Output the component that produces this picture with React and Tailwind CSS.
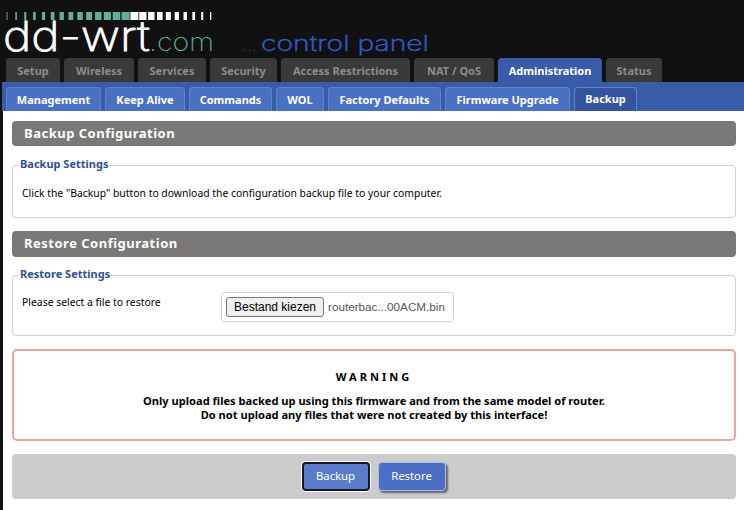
const mainTabs = [
  { label: 'Setup', w: 'w-[54px]' },
  { label: 'Wireless', w: 'w-[70px]' },
  { label: 'Services', w: 'w-[68px]' },
  { label: 'Security', w: 'w-[67px]' },
  { label: 'Access Restrictions', w: 'w-[129px]' },
  { label: 'NAT / QoS', w: 'w-[80px]' },
  { label: 'Administration', w: 'w-[104px]', active: true },
  { label: 'Status', w: 'w-[56px]' },
];

const subTabs = [
  { label: 'Management', w: 'w-[95px]' },
  { label: 'Keep Alive', w: 'w-[80px]' },
  { label: 'Commands', w: 'w-[83px]' },
  { label: 'WOL', w: 'w-[48px]' },
  { label: 'Factory Defaults', w: 'w-[113px]' },
  { label: 'Firmware Upgrade', w: 'w-[125px]' },
  { label: 'Backup', w: 'w-[63px]', active: true },
];

const bars = Array.from({ length: 24 }, (_, i) => {
  const green = i < 14;
  const width = green ? 1 + i * 0.55 : 8 - (i - 14) * 0.75;
  return { x: 6.5 + i * 8.85, width, fill: green ? '#62b09b' : '#ffffff' };
});

function Logo() {
  const font = "Inter, sans-serif";
  return (
    <svg width="440" height="58" viewBox="0 0 440 58" className="block overflow-visible">
      {bars.map((b) => (
        <rect key={b.x} x={b.x} y="12" width={b.width} height="8" fill={b.fill} />
      ))}
      <text x="3" y="51" fontFamily={font} fontSize="41" fontWeight="200" fill="#ffffff" stroke="#ffffff" strokeWidth="0.8" textLength="147" lengthAdjust="spacingAndGlyphs">dd-wrt</text>
      <text x="149" y="51" fontFamily={font} fontSize="25" fontWeight="200" fill="#5fa592" textLength="65" lengthAdjust="spacingAndGlyphs">.com</text>
      <text x="243" y="51" fontFamily={font} fontSize="12" fontWeight="300" fill="#2a4a9a" textLength="13" lengthAdjust="spacing">...</text>
      <text x="261" y="51" fontFamily={font} fontSize="22" fontWeight="200" fill="#2f5bc4" stroke="#2f5bc4" strokeWidth="0.5" textLength="168" lengthAdjust="spacingAndGlyphs">control panel</text>
    </svg>
  );
}

function Section({ title, className }) {
  return (
    <h2 className={`rounded bg-[#7a7977] pl-3 text-[13px] font-bold tracking-[0.5px] text-white ${className}`}>
      {title}
    </h2>
  );
}

function Box({ legend, className, children }) {
  return (
    <fieldset className={`rounded border border-[#cfcfcf] px-[9px] ${className}`}>
      <legend className="ml-[-3px] px-[1px] pb-[2px] text-[11px] leading-[14px] font-bold text-[#30508f]">{legend}</legend>
      {children}
    </fieldset>
  );
}

export default function App() {
  return (
    <div className="h-[510px] w-[744px] overflow-hidden bg-[#111111] font-['Noto_Sans',sans-serif]">
      <Logo />

      <div className="flex h-[24px] gap-1 pl-[6px]">
        {mainTabs.map((t) => (
          <div
            key={t.label}
            className={`${t.w} rounded-t-[4px] text-center text-[11px] leading-[25px] font-bold ${
              t.active ? 'bg-[#3a5ca8] text-white' : 'bg-[#3a3a3a] text-[#8c8c8c]'
            }`}
          >
            {t.label}
          </div>
        ))}
      </div>

      <div className="ml-[2px] flex h-[29px] items-end gap-1 bg-[#3a5ca8] pl-1">
        {subTabs.map((t) => (
          <div
            key={t.label}
            className={`${t.w} h-[24px] rounded-t-[4px] border-x border-t border-[#5f82cc] text-center text-[11px] font-bold text-white ${
              t.active ? 'bg-[#34549f] leading-[21px]' : 'bg-[#4a70c4] leading-[24px]'
            }`}
          >
            {t.label}
          </div>
        ))}
      </div>

      <main className="ml-[3px] h-[399px] bg-white pt-[10px] pr-2 pl-[9px] text-[10.4px] text-black">
        <Section title="Backup Configuration" className="h-[25px] leading-[25px]" />
        <Box legend="Backup Settings" className="mt-[11px] h-[61px]">
          <p className="mt-[13px] leading-[14px]">Click the "Backup" button to download the configuration backup file to your computer.</p>
        </Box>

        <Section title="Restore Configuration" className="mt-[13px] h-[26px] leading-[25px]" />
        <Box legend="Restore Settings" className="mt-[10px] h-[69px]">
          <div className="mt-[9px] flex items-start">
            <span className="mt-[3px] w-[199px] leading-[14px]">Please select a file to restore</span>
            <div className="flex h-[30px] w-[233px] items-center gap-1 rounded border border-[#d4d4d4] pl-[4px]">
              <button className="h-[20px] w-[98px] rounded-[3px] border border-[#767676] bg-[#efefef] font-['Liberation_Sans',sans-serif] text-[12px] leading-[18px] text-black">
                Bestand kiezen
              </button>
              <span className="font-['Liberation_Sans',sans-serif] text-[11.7px] text-[#555555]">routerbac...00ACM.bin</span>
            </div>
          </div>
        </Box>

        <div className="mt-[13px] flex h-[92px] flex-col items-center rounded-[5px] border-2 border-[#e8a3a5] pt-[19px] text-center text-[11.1px] font-bold leading-[14px]">
          <p className="mb-[10px] tracking-[3px]">WARNING</p>
          <p>Only upload files backed up using this firmware and from the same model of router.</p>
          <p>Do not upload any files that were not created by this interface!</p>
        </div>

        <div className="mt-[13px] flex h-[45px] items-center justify-center gap-2 rounded-sm bg-[#cccccc] pr-[1px]">
          <button className="h-[29px] w-[68px] rounded-[4px] border-2 border-[#10182a] bg-[#5b7ccb] text-[11.3px] text-white shadow-[0_0_0_1px_#ffffff]">
            Backup
          </button>
          <button className="h-[29px] w-[68px] rounded-[4px] border border-[#a9bce6] bg-[#4a6fc4] text-[11.3px] text-white shadow-[2px_2px_2px_#666666]">
            Restore
          </button>
        </div>
      </main>
    </div>
  );
}
